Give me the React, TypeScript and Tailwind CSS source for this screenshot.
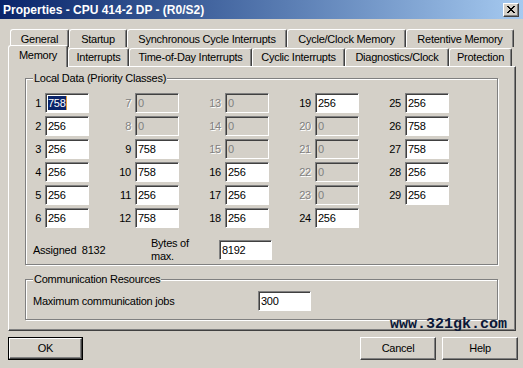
const ui = { fontFamily: '"Liberation Sans", Arial, sans-serif' };

const row1Tabs = [
  { label: "General", w: "w-[59px]" },
  { label: "Startup", w: "w-[58px]" },
  { label: "Synchronous Cycle Interrupts", w: "w-[160px]" },
  { label: "Cycle/Clock Memory", w: "w-[119px]" },
  { label: "Retentive Memory", w: "w-[108px]" },
];

const row2Tabs = [
  { label: "Interrupts", w: "w-[61px]" },
  { label: "Time-of-Day Interrupts", w: "w-[123px]" },
  { label: "Cyclic Interrupts", w: "w-[93px]" },
  { label: "Diagnostics/Clock", w: "w-[104px]" },
  { label: "Protection", w: "w-[63px]" },
];

type Cell = { n: number; v: string; off?: boolean; sel?: boolean };

const columns: Cell[][] = [
  [
    { n: 1, v: "758", sel: true },
    { n: 2, v: "256" },
    { n: 3, v: "256" },
    { n: 4, v: "256" },
    { n: 5, v: "256" },
    { n: 6, v: "256" },
  ],
  [
    { n: 7, v: "0", off: true },
    { n: 8, v: "0", off: true },
    { n: 9, v: "758" },
    { n: 10, v: "758" },
    { n: 11, v: "256" },
    { n: 12, v: "758" },
  ],
  [
    { n: 13, v: "0", off: true },
    { n: 14, v: "0", off: true },
    { n: 15, v: "0", off: true },
    { n: 16, v: "256" },
    { n: 17, v: "256" },
    { n: 18, v: "256" },
  ],
  [
    { n: 19, v: "256" },
    { n: 20, v: "0", off: true },
    { n: 21, v: "0", off: true },
    { n: 22, v: "0", off: true },
    { n: 23, v: "0", off: true },
    { n: 24, v: "256" },
  ],
  [
    { n: 25, v: "256" },
    { n: 26, v: "758" },
    { n: 27, v: "758" },
    { n: 28, v: "256" },
    { n: 29, v: "256" },
  ],
];

const sunken =
  "border border-t-[#808080] border-l-[#808080] border-r-white border-b-white shadow-[inset_1px_1px_0_#404040]";
const etched =
  "border border-[#808080] shadow-[inset_1px_1px_0_#ffffff,1px_1px_0_#ffffff]";
const tab =
  "flex items-center justify-center border-t border-l border-r border-t-white border-l-white border-r-[#404040] rounded-tl-[3px] rounded-tr-[2px] shadow-[inset_-1px_0_0_#808080]";

function Field({ value, w = "w-[44px]", off, sel }: { value: string; w?: string; off?: boolean; sel?: boolean }) {
  return (
    <div className={`${sunken} ${w} h-[20px] flex items-center pl-[2px] ${off ? "bg-[#d4d0c8] text-[#808080]" : "bg-white text-black"}`}>
      {sel ? (
        <>
          <span className="bg-[#0a246a] text-white leading-[14px]">{value}</span>
          <span className="w-px h-[14px] bg-[#e0a040]" />
        </>
      ) : (
        <span>{value}</span>
      )}
    </div>
  );
}

function Button({ label, main }: { label: string; main?: boolean }) {
  return (
    <div className={`h-[23px] ${main ? "w-[75px] border border-black" : "w-[76px]"}`}>
      <div className="h-full w-full flex items-center justify-center border border-t-white border-l-white border-r-[#404040] border-b-[#404040] shadow-[inset_-1px_-1px_0_#808080]">
        {label}
      </div>
    </div>
  );
}

export default function App() {
  return (
    <div
      className="w-[523px] h-[368px] bg-[#d4d0c8] text-[11px] tracking-[-0.25px] text-black overflow-hidden"
      style={ui}
    >
      <div className="h-[19px] flex items-center justify-between pl-[3px] pr-[4px] bg-gradient-to-r from-[#0a246a] to-[#a6caf0]">
        <span className="text-white font-bold text-[12px] tracking-normal">
          Properties - CPU 414-2 DP - (R0/S2)
        </span>
        <div className="w-[16px] h-[14px] bg-[#d4d0c8] flex items-center justify-center border border-t-white border-l-white border-r-[#404040] border-b-[#404040] shadow-[inset_-1px_-1px_0_#808080]">
          <svg width="8" height="7" viewBox="0 0 8 7">
            <path d="M0 0h2v1h1v1h2V1h1V0h2v1H7v1H6v1H5v1h1v1h1v1h1v1H6V6H5V5H3v1H2v1H0V6h1V5h1V4h1V3H2V2H1V1H0z" fill="#000" />
          </svg>
        </div>
      </div>

      <div className="px-[8px] pt-[10px]">
        <div className="flex h-[18px] pl-[2px]">
          {row1Tabs.map((t) => (
            <div key={t.label} className={`${tab} ${t.w} h-[18px] pt-[1px]`}>
              {t.label}
            </div>
          ))}
        </div>
        <div className="flex h-[19px] items-end">
          <div className={`${tab} relative z-10 w-[60px] h-[22px] -mb-px bg-[#d4d0c8] pb-[3px]`}>
            Memory
          </div>
          {row2Tabs.map((t) => (
            <div key={t.label} className={`${tab} ${t.w} h-[18px]`}>
              {t.label}
            </div>
          ))}
        </div>

        <div className="relative w-[508px] h-[265px] border border-t-white border-l-white border-r-[#404040] border-b-[#404040] shadow-[inset_-1px_-1px_0_#808080] pl-[16px] pt-[5px]">
          <fieldset className={`${etched} w-[473px] px-0 pt-[8px] pb-[1px] m-0`}>
            <legend className="ml-[7px] px-[1px] leading-[13px] bg-[#d4d0c8]">Local Data (Priority Classes)</legend>
            <div className="flex">
              {columns.map((col, ci) => (
                <div key={ci} className="w-[90px] flex flex-col gap-[3px]">
                  {col.map((c) => (
                    <div key={c.n} className="flex items-center h-[20px]">
                      <span
                        className={`w-[15px] text-right ${c.off ? "text-[#808080] [text-shadow:1px_1px_0_#ffffff]" : ""}`}
                      >
                        {c.n}
                      </span>
                      <div className="ml-[4px]">
                        <Field value={c.v} off={c.off} sel={c.sel} />
                      </div>
                    </div>
                  ))}
                </div>
              ))}
            </div>
            <div className="flex items-center mt-[9px] h-[26px]">
              <span className="ml-[7px] w-[118px]">Assigned&nbsp; 8132</span>
              <span className="w-[68px] leading-[13px]">
                Bytes of
                <br />
                max.
              </span>
              <Field value="8192" w="w-[53px]" />
            </div>
          </fieldset>

          <fieldset className={`${etched} w-[473px] mt-[8px] px-0 pt-[5px] pb-[8px] m-0`}>
            <legend className="ml-[7px] px-[1px] leading-[13px] bg-[#d4d0c8]">Communication Resources</legend>
            <div className="flex items-center">
              <span className="ml-[7px] w-[225px]">Maximum communication jobs</span>
              <Field value="300" w="w-[53px]" />
            </div>
          </fieldset>

          <span
            className="absolute right-[8px] bottom-[-1px] font-bold text-[15px] tracking-normal leading-[13px] text-[#0b1838]"
            style={{ fontFamily: '"Liberation Mono", "Courier New", monospace' }}
          >
            www.321gk.com
          </span>
        </div>

        <div className="flex mt-[6px]">
          <Button label="OK" main />
          <div className="ml-auto mr-[-3px] flex gap-[6px]">
            <Button label="Cancel" />
            <Button label="Help" />
          </div>
        </div>
      </div>
    </div>
  );
}
